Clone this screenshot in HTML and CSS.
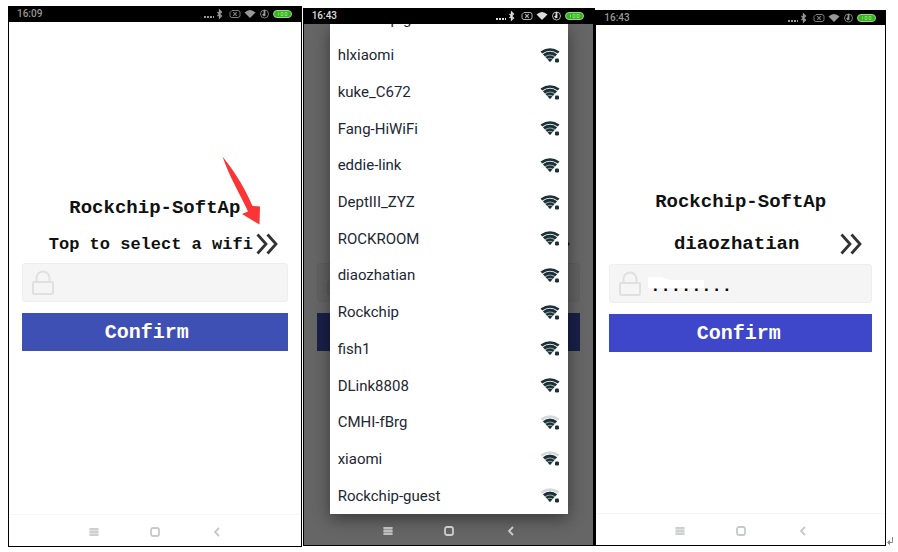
FILE: index.html
```html
<!DOCTYPE html>
<html lang="en">
<head>
<meta charset="utf-8">
<title>Rockchip-SoftAp</title>
<link rel="stylesheet" href="styles.css">
</head>
<body>
<svg class="defs" aria-hidden="true">
  <symbol id="status" viewBox="0 0 90 12">
    <path d="M1 8h2v2h-2zM4 8h2v2h-2zM7 8h2v2h-2zM10 8h1v2h-1z" fill="currentColor"/>
    <path d="M14.500 4l4 4-2 2V2l2 2-4 4" fill="none" stroke="currentColor" stroke-width="1.300"/>
    <path d="M29 2.500h6q2 0 2 2v3q0 2-2 2h-6q-2 0-2-2v-3z" fill="none" stroke="currentColor" opacity=".8"/>
    <path d="M30.200 4.200l3.600 3.600M33.800 4.200l-3.600 3.600" stroke="currentColor" stroke-width="1.200" opacity=".8"/>
    <path d="M41.500 4.500q5.500-5 11 0L47 10z" fill="currentColor"/>
    <circle cx="61.500" cy="6" r="4" fill="none" stroke="currentColor" opacity=".8"/>
    <path d="M61.500 2v6M59.800 6l1.700 2" fill="none" stroke="currentColor" stroke-width="1.800"/>
    <rect x="70.500" y="2.500" width="18" height="7" rx="3.500" fill="#36b51c" stroke="#9ad58e"/>
    <path d="M75.500 4.500v3M78 4.500h2v3h-2zM82 4.500h2v3h-2z" fill="none" stroke="#8fe67c" stroke-width=".8"/>
  </symbol>
  <symbol id="chevrons" viewBox="0 0 22 22">
    <path d="M1.500 1.500L10 11l-8.500 9.500M11.500 1.500L20 11l-8.500 9.500" fill="none" stroke="currentColor" stroke-width="2.800"/>
  </symbol>
  <symbol id="lock" viewBox="0 0 24 26">
    <rect x="2" y="12" width="20" height="12" rx="1" fill="none" stroke="currentColor" stroke-width="2"/>
    <path d="M5.500 12V8a6.500 6.500 0 0 1 13 0v4" fill="none" stroke="currentColor" stroke-width="2"/>
  </symbol>
  <symbol id="menu" viewBox="0 0 10 10"><path d="M.5 1h9v8h-9z" fill="currentColor" opacity=".5"/><path d="M.5 2h9M.5 5h9M.5 8h9" stroke="currentColor" stroke-width="1.600"/></symbol>
  <symbol id="home" viewBox="0 0 10 10"><rect x="1" y="1" width="8" height="8" rx="2" fill="none" stroke="currentColor" stroke-width="1.800"/></symbol>
  <symbol id="back" viewBox="0 0 10 10"><path d="M8 1L4 5l4 4" fill="none" stroke="currentColor" stroke-width="1.800"/></symbol>
  <symbol id="wifi" viewBox="0 0 20 17">
    <path class="outer" d="M.5 4.500Q10-2 19.500 4.500L17.800 6.500Q10 1 2.200 6.500z"/>
    <path d="M3 7.200Q10 2.500 17 7.200L15.200 9.200Q10 5.800 4.800 9.200zM5.600 10Q10 7 14.400 10L12.900 11.700Q10 10 7.100 11.700zM7.700 12.400Q10 11 12.300 12.400L10 15z" fill="currentColor"/>
    <path d="M2.800 7.200Q10 2 17.200 7.200L10 15z" fill="currentColor" opacity=".45"/>
    <rect x="15" y="11.500" width="4" height="4" rx="1.200" fill="currentColor"/>
  </symbol>
</svg>

<main class="board">
  <section class="phone first">
    <header class="status"><span>16:09</span><svg class="status-icons"><use href="#status"/></svg></header>
    <form class="screen">
      <h1 class="title">Rockchip-SoftAp</h1>
      <button class="picker" type="button"><span>Top to select a wifi</span><svg class="chevrons"><use href="#chevrons"/></svg></button>
      <label class="field"><svg class="lock"><use href="#lock"/></svg><input type="text" aria-label="Password"></label>
      <button class="confirm" type="submit">Confirm</button>
      <svg class="pointer" viewBox="0 0 40 70" aria-hidden="true"><path d="M.5.500C8 10 21 27 30.500 50L38 50.500 37.500 68.500 20 58 26 55.500C19 40 7 20 .5.500z" fill="#fb3535"/></svg>
    </form>
    <nav class="keys"><svg><use href="#menu"/></svg><svg><use href="#home"/></svg><svg><use href="#back"/></svg></nav>
  </section>

  <section class="phone second">
    <header class="status"><span>16:43</span><svg class="status-icons"><use href="#status"/></svg></header>
    <div class="screen" aria-hidden="true">
      <div class="title"></div>
      <div class="picker"><span></span><svg class="chevrons"><use href="#chevrons"/></svg></div>
      <div class="field"><svg class="lock"><use href="#lock"/></svg></div>
      <div class="confirm"></div>
    </div>
    <div class="scrim">
      <ul class="networks">
        <li class="cut"><span>Rockchip-guest</span></li>
        <li><span>hlxiaomi</span><svg><use href="#wifi"/></svg></li>
        <li><span>kuke_C672</span><svg><use href="#wifi"/></svg></li>
        <li><span>Fang-HiWiFi</span><svg><use href="#wifi"/></svg></li>
        <li><span>eddie-link</span><svg><use href="#wifi"/></svg></li>
        <li><span>DeptIII_ZYZ</span><svg><use href="#wifi"/></svg></li>
        <li><span>ROCKROOM</span><svg><use href="#wifi"/></svg></li>
        <li><span>diaozhatian</span><svg><use href="#wifi"/></svg></li>
        <li><span>Rockchip</span><svg><use href="#wifi"/></svg></li>
        <li><span>fish1</span><svg><use href="#wifi"/></svg></li>
        <li><span>DLink8808</span><svg><use href="#wifi"/></svg></li>
        <li class="weak"><span>CMHI-fBrg</span><svg><use href="#wifi"/></svg></li>
        <li class="weak"><span>xiaomi</span><svg><use href="#wifi"/></svg></li>
        <li class="weak"><span>Rockchip-guest</span><svg><use href="#wifi"/></svg></li>
      </ul>
      <nav class="keys"><svg><use href="#menu"/></svg><svg><use href="#home"/></svg><svg><use href="#back"/></svg></nav>
    </div>
  </section>

  <section class="phone third">
    <header class="status"><span>16:43</span><svg class="status-icons"><use href="#status"/></svg></header>
    <form class="screen">
      <h1 class="title">Rockchip-SoftAp</h1>
      <button class="picker" type="button"><span class="chosen">diaozhatian</span><svg class="chevrons"><use href="#chevrons"/></svg></button>
      <label class="field"><svg class="lock"><use href="#lock"/></svg><svg class="patch" viewBox="0 0 56 12"><path d="M0 0h14q4 3 10 3h32v8H0z" fill="#fff"/></svg><input type="text" aria-label="Password" value="........"></label>
      <button class="confirm" type="submit">Confirm</button>
    </form>
    <nav class="keys"><svg><use href="#menu"/></svg><svg><use href="#home"/></svg><svg><use href="#back"/></svg></nav>
  </section>
  <svg class="return" viewBox="0 0 6 8" aria-hidden="true"><path d="M5.500 0v5.500H1M2.500 3.500v4L.5 5.500z" fill="none" stroke="#888"/></svg>
</main>
</body>
</html>
```

FILE: styles.css
```css
* { box-sizing: border-box; }
body { margin: 0; background: #fff; font-family: Roboto, sans-serif; }
.defs { position: absolute; width: 0; height: 0; }
svg { display: block; flex: none; }

.board { display: flex; min-height: 100vh; padding: 0 5px 0 8px; }
.phone {
  position: relative;
  display: flex;
  flex-direction: column;
  min-width: 0;
  border: solid #000;
  border-width: 0 1px 1px;
  background: #fff;
}
.first { flex: 294 1 0; margin: 6px 1px 5px 0; }
.second { flex: 292 1 0; margin: 8px 0 6px; border-right-width: 2px; }
.third { flex: 291 1 0; margin: 10px 1px 6px 0; }

.status {
  display: flex;
  align-items: center;
  justify-content: space-between;
  height: 16px;
  padding: 0 8px;
  background: #000;
  color: #999;
  font-size: 10px;
  font-weight: 500;
  line-height: 16px;
}
.second .status { color: #ddd; }
.third .status { height: 15px; }
.status-icons { width: 90px; height: 12px; }

.screen {
  position: relative;
  flex: 1;
  display: flex;
  flex-direction: column;
  padding: 174px 13px 0;
  font-family: "Liberation Mono", monospace;
  font-weight: bold;
  color: #111;
}
.second .screen { padding-top: 172px; }
.third .screen { padding-top: 165px; }
.title { height: 24px; margin: 0; font-size: 19px; line-height: 24px; text-align: center; }
.picker {
  display: flex;
  align-items: center;
  height: 28px;
  margin: 10px 0 5px;
  padding: 0 10px 0 24px;
  border: 0;
  background: none;
  font: inherit;
  font-size: 17px;
  color: inherit;
}
.third .picker { margin-top: 16px; margin-bottom: 6px; }
.picker span { flex: 1; text-align: center; white-space: nowrap; }
.picker .chosen { font-size: 19px; }
.chevrons { width: 22px; height: 22px; color: #333; }
.field {
  position: relative;
  display: flex;
  align-items: center;
  height: 39px;
  padding: 0 8px;
  border: 1px solid #eee;
  border-radius: 3px;
  background: #f5f5f5;
}
.lock { width: 24px; height: 26px; color: #e0e0e0; }
.patch { position: absolute; left: 38px; top: 12px; width: 56px; height: 12px; }
.field input {
  position: relative;
  flex: 1;
  min-width: 0;
  height: 36px;
  padding: 6px 0 0 8px;
  border: 0;
  outline: 0;
  background: none;
  font: bold 17px "Liberation Mono", monospace;
  color: #000;
}
.confirm {
  height: 38px;
  margin-top: 11px;
  padding: 0;
  border: 0;
  background: #3f50b4;
  font: bold 20px "Liberation Mono", monospace;
  color: #fff;
}
.first .confirm { padding-right: 16px; }
.third .confirm { background: #3e46ca; padding-right: 4px; }
.pointer { position: absolute; left: 213px; top: 134px; width: 40px; height: 70px; }

.keys {
  display: flex;
  align-items: center;
  justify-content: center;
  gap: 51px;
  height: 32px;
  padding-top: 3px;
  border-top: 1px solid #f7f7f7;
  color: #c6c9c8;
}
.keys svg { width: 10px; height: 10px; }

.scrim {
  position: absolute;
  inset: 16px 0 0;
  display: flex;
  flex-direction: column;
  overflow: hidden;
  background: rgba(0, 0, 0, .6);
}
.scrim .keys { position: relative; height: 31px; padding: 2px 0 0 2px; border: 0; color: #ccc; }
.networks {
  flex: 1;
  display: flex;
  flex-direction: column;
  margin: 0 25px 0 26px;
  padding: 0;
  background: #fff;
  box-shadow: 0 5px 16px rgba(0, 0, 0, .45);
  color: #1d2733;
  font-size: 15px;
  line-height: 18px;
  list-style: none;
}
.networks li {
  flex: 1;
  display: flex;
  align-items: center;
  justify-content: space-between;
  padding: 0 8px;
}
.networks .cut { flex: none; height: 13px; align-items: flex-end; overflow: hidden; padding-bottom: 9px; }
.networks svg { width: 20px; height: 17px; color: #1b3038; fill: #1b3038; }
.networks .weak svg { fill: #d5d9da; }
.return { align-self: flex-end; width: 6px; height: 8px; margin-bottom: 7px; }
```
